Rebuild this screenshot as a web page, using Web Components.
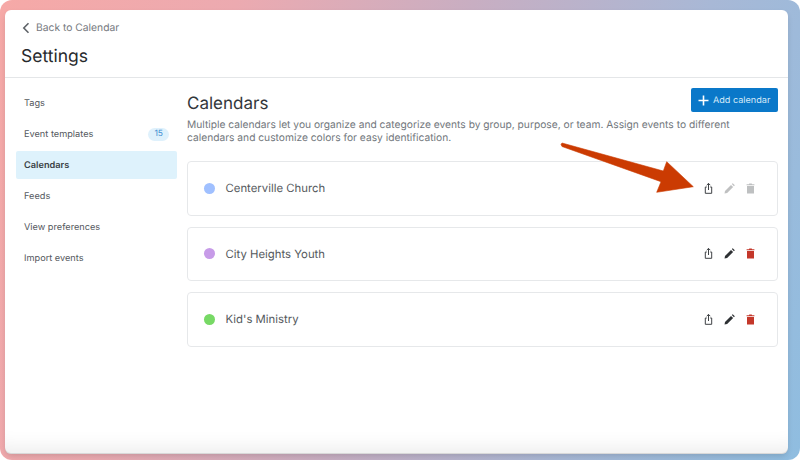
<!DOCTYPE html>
<html><head><meta charset="utf-8"><style>
html,body{margin:0;padding:0;width:800px;height:460px;overflow:hidden;background:#fff}
body{font-family:Inter,"Liberation Sans",sans-serif;text-rendering:geometricPrecision}
</style></head><body>
<template id="t-stage"><style>
:host{display:block;position:relative;width:800px;height:460px;box-sizing:border-box;padding:10px 12px 6px 5px;border-radius:12px;overflow:hidden;background:linear-gradient(108deg,#f6a9a7 0%,#ecaab0 25%,#c8aec2 50%,#a8b8d6 75%,#8fbde0 100%)}
.win{height:100%;background:#fff;border-radius:6px;overflow:hidden;display:flex;flex-direction:column;position:relative;box-shadow:inset 0 -26px 20px -20px rgba(0,0,0,.08),inset 0 -1px 0 rgba(0,0,0,.1),0 3px 6px -1px rgba(0,0,0,.14)}
</style><div class="win"><slot></slot></div><slot name="over"></slot></template>

<template id="t-head"><style>
:host{display:block;height:68px;box-sizing:border-box;padding:10px 16px 0;border-bottom:1px solid #e4e6e8;flex:none}
.back{display:flex;align-items:center;gap:6px;height:16px;font-size:10.3px;color:#75797e}
svg{display:block;margin-left:1px;flex:none}
h1{margin:9px 0 0;font-size:17.5px;line-height:24px;font-weight:400;color:#27292c}
</style><div class="back"><svg width="8" height="12" viewBox="0 0 8 12"><path d="M6.500 1.200 1.800 6l4.700 4.800" fill="none" stroke="#5f6368" stroke-width="1.6"/></svg><span>Back to Calendar</span></div><h1>Settings</h1></template>

<template id="t-side"><style>
:host{display:flex;flex-direction:column;width:161px;gap:3px;flex:none}
</style><slot></slot></template>

<template id="t-nav"><style>
:host{display:flex;align-items:center;justify-content:space-between;height:28px;box-sizing:border-box;padding:0 8px;border-radius:2px;font-size:9.2px;color:#55595e}
:host([active]){background:#def2fc;font-weight:600;color:#3a3f44}
.b{font-size:8.5px;color:#3f8fd2;background:#dff1fc;border-radius:7px;padding:0 6px;height:13px;line-height:13px;display:inline-block}
</style><span><slot></slot></span><span id="b"></span></template>

<template id="t-main"><style>
:host{display:block;flex:1;min-width:0;margin-top:-1px}
.top{display:flex;justify-content:space-between;align-items:flex-start;height:24px}
h2{margin:4px 0 0;font-size:17px;line-height:24px;font-weight:400;color:#33373b}
p{margin:7px 0 0;font-size:10.24px;line-height:13px;color:#72777c;width:570px}
.list{display:flex;flex-direction:column;gap:11px;margin-top:16px}
</style><div class="top"><h2>Calendars</h2><slot name="action"></slot></div>
<p><slot name="desc"></slot></p><div class="list"><slot></slot></div></template>

<template id="t-btn"><style>
:host{display:flex;align-items:center;gap:4px;box-sizing:border-box;width:87px;height:24px;padding:0 7px;background:#0a78c9;color:#d6ebf9;border-radius:2px;font-size:9.1px;font-weight:400;white-space:nowrap}
svg{display:block;flex:none}
</style><svg width="11" height="11" viewBox="0 0 11 11"><path d="M5.500.5v10M.5 5.500h10" stroke="#fff" stroke-width="1.6"/></svg><span><slot></slot></span></template>

<template id="t-card"><style>
:host{display:flex;align-items:center;box-sizing:border-box;height:54.5px;border:1px solid #e6e8ea;border-radius:4px;padding:0 21px 0 16px;background:#fff}
.dot{width:11px;height:11px;border-radius:50%;background:var(--c);flex:none}
.name{margin-left:10.5px;flex:1;font-size:11.35px;color:#55595d}
.acts{display:flex;gap:10.2px;align-items:center}
svg{display:block;width:11px;height:11px;flex:none}
:host([muted]) .e{opacity:.3}
:host([muted]) .d{fill:#8a8d90;opacity:.55}
.d{fill:#c4372a}
</style><span class="dot"></span><span class="name"><slot></slot></span>
<div class="acts">
<svg viewBox="0 0 11 11"><path d="M5.500.4v6.600M3.700 2.200 5.500.4l1.800 1.800M3.800 4H2.300v6.300h6.400V4H7.200" fill="none" stroke="#3f4245" stroke-width="1"/></svg>
<svg class="e" viewBox="0 0 11 11"><path d="M.5 10.500l.5-2.600L7 1.900l2.100 2.100-6 6z" fill="#2e3134"/><path d="M7.800 1.100 8.700.2l2.100 2.100-.9.900z" fill="#2e3134"/></svg>
<svg class="d" viewBox="0 0 11 11"><path d="M2 3h7v7.500H2zM1.600 1.300h2.300L4.300.6h2.400l.4.700h2.300v1H1.600z"/></svg>
</div></template>

<template id="t-arrow"><style>
:host{display:block;position:absolute;left:0;top:0;width:800px;height:460px;pointer-events:none}
svg{display:block}
</style><svg width="800" height="460" viewBox="0 0 800 460"><path d="M562 143 663.300 171 666.700 161.700 693.300 186.700 656.700 192.300 661 181.700 562 146.500 561 144.500z" fill="#cb3b02" stroke="#cb3b02" stroke-width=".6" stroke-linejoin="round"/></svg></template>

<app-stage>
<set-head></set-head>
<div style="display:flex;gap:10px;padding:11px 10px 0 11px;flex:1;min-height:0">
 <side-bar>
  <nav-item>Tags</nav-item>
  <nav-item badge="15">Event templates</nav-item>
  <nav-item active>Calendars</nav-item>
  <nav-item>Feeds</nav-item>
  <nav-item>View preferences</nav-item>
  <nav-item>Import events</nav-item>
 </side-bar>
 <main-pane>
  <add-btn slot="action">Add calendar</add-btn>
  <span slot="desc">Multiple calendars let you organize and categorize events by group, purpose, or team. Assign events to different calendars and customize colors for easy identification.</span>
  <cal-card muted style="--c:#a0c0ff">Centerville Church</cal-card>
  <cal-card style="--c:#c79be8">City Heights Youth</cal-card>
  <cal-card style="--c:#77d965">Kid's Ministry</cal-card>
 </main-pane>
</div>
<red-arrow slot="over"></red-arrow>
</app-stage>

<script>
function def(tag,tid,init){customElements.define(tag,class extends HTMLElement{constructor(){super();const r=this.attachShadow({mode:'open'});r.appendChild(document.getElementById(tid).content.cloneNode(true));}connectedCallback(){if(init)init(this)}})}
def('app-stage','t-stage');def('set-head','t-head');def('side-bar','t-side');
def('nav-item','t-nav',el=>{const v=el.getAttribute('badge');const b=el.shadowRoot.getElementById('b');if(v){b.className='b';b.textContent=v}});
def('main-pane','t-main');def('add-btn','t-btn');def('cal-card','t-card');def('red-arrow','t-arrow');
</script>
</body></html>
